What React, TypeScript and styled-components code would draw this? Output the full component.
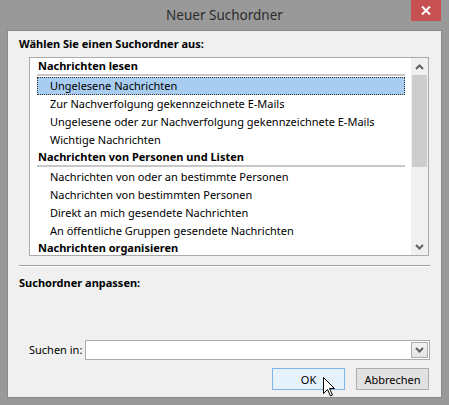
import React from "react";
import styled, { createGlobalStyle } from "styled-components";

const GlobalStyle = createGlobalStyle`
  html, body {
    margin: 0;
    padding: 0;
    background: #999999;
  }
  * {
    box-sizing: border-box;
  }
`;

const Frame = styled.div`
  position: relative;
  width: 449px;
  height: 405px;
  background: #999999;
  display: flex;
  flex-direction: column;
  font-family: "Noto Sans", "Open Sans", sans-serif;
  font-size: 11px;
  color: #000;
`;

const TitleBar = styled.div`
  height: 30px;
  display: flex;
  align-items: flex-start;
  justify-content: center;
  position: relative;
`;

const Title = styled.div`
  margin-top: 4px;
  font-size: 13.5px;
  line-height: 22px;
  color: #2b2b2b;
`;

const CloseButton = styled.div`
  position: absolute;
  top: 0;
  right: 8px;
  width: 30px;
  height: 21px;
  background: #c75050;
  display: flex;
  align-items: center;
  justify-content: center;
`;

const Client = styled.div`
  flex: 1;
  margin: 0 7px 7px 7px;
  border: 1px solid #8a8a8a;
  background: #f0f0f0;
  display: flex;
  flex-direction: column;
  padding: 4px 11px 7px 11px;
`;

const SectionLabel = styled.div`
  font-weight: 700;
  line-height: 17px;
`;

const ListBox = styled.div`
  margin: 5px 0 0 10px;
  width: 400px;
  height: 199px;
  border: 1px solid #ababab;
  background: #fff;
  display: flex;
`;

const ListItems = styled.div`
  flex: 1;
  padding: 0 6px 0 7px;
  overflow: hidden;
`;

const GroupHeader = styled.div`
  height: 18px;
  padding: 0 0 0 1px;
  font-weight: 700;
  line-height: 15px;
  border-bottom: 2px solid #c8c8c8;
  margin-bottom: 1px;
`;

const Item = styled.div<{ $selected?: boolean }>`
  height: 18px;
  line-height: 16px;
  padding-left: 12px;
  white-space: nowrap;
  background: ${(p) => (p.$selected ? "#a8cdf1" : "transparent")};
  border: 1px dotted ${(p) => (p.$selected ? "#333" : "transparent")};
`;

const ScrollBar = styled.div`
  width: 17px;
  background: #f0f0f0;
  display: flex;
  flex-direction: column;
`;

const ScrollArrow = styled.div`
  height: 17px;
  display: flex;
  align-items: center;
  justify-content: center;
`;

const ScrollThumb = styled.div`
  height: 92px;
  margin: 0 1px;
  background: #cdcdcd;
`;

const ScrollTrack = styled.div`
  flex: 1;
`;

const Separator = styled.div`
  margin-top: 9px;
  height: 2px;
  border-top: 1px solid #a0a0a0;
  border-bottom: 1px solid #ffffff;
`;

const CustomizeLabel = styled(SectionLabel)`
  margin-top: 7px;
`;

const Spacer = styled.div`
  flex: 1;
`;

const SearchRow = styled.div`
  display: flex;
  align-items: center;
  padding-left: 10px;
  gap: 3px;
`;

const SearchLabel = styled.div`
  line-height: 16px;
`;

const Combo = styled.div`
  flex: 1;
  height: 20px;
  border: 1px solid #ababab;
  background: #fff;
  display: flex;
  justify-content: flex-end;
  align-items: center;
  padding-right: 1px;
`;

const ComboButton = styled.div`
  width: 17px;
  height: 16px;
  border: 1px solid #acacac;
  background: linear-gradient(#f2f2f2, #e4e4e4);
  display: flex;
  align-items: center;
  justify-content: center;
`;

const ButtonRow = styled.div`
  display: flex;
  justify-content: flex-end;
  gap: 11px;
  margin-top: 8px;
  padding-right: 1px;
  position: relative;
`;

const Button = styled.div<{ $default?: boolean }>`
  width: 73px;
  height: 22px;
  display: flex;
  align-items: center;
  justify-content: center;
  border: 1px solid ${(p) => (p.$default ? "#7eb4ea" : "#adadad")};
  background: ${(p) => (p.$default ? "#e5f1fb" : "#e1e1e1")};
`;

const Cursor = styled.svg`
  position: absolute;
  left: 304px;
  top: 9px;
`;

const Chevron: React.FC<{ up?: boolean }> = ({ up }) => (
  <svg width="9" height="6" viewBox="0 0 9 6">
    <path
      d={up ? "M1 5 L4.5 1.5 L8 5" : "M1 1 L4.5 4.5 L8 1"}
      fill="none"
      stroke="#606060"
      strokeWidth="2"
    />
  </svg>
);

const App: React.FC = () => {
  return (
    <>
      <GlobalStyle />
      <Frame>
        <TitleBar>
          <Title>Neuer Suchordner</Title>
          <CloseButton>
            <svg width="10" height="9" viewBox="0 0 10 9">
              <path d="M1 0.5 L9 8.5 M9 0.5 L1 8.5" stroke="#fff" strokeWidth="2" />
            </svg>
          </CloseButton>
        </TitleBar>
        <Client>
          <SectionLabel>Wählen Sie einen Suchordner aus:</SectionLabel>
          <ListBox>
            <ListItems>
              <GroupHeader>Nachrichten lesen</GroupHeader>
              <Item $selected>Ungelesene Nachrichten</Item>
              <Item>Zur Nachverfolgung gekennzeichnete E-Mails</Item>
              <Item>Ungelesene oder zur Nachverfolgung gekennzeichnete E-Mails</Item>
              <Item>Wichtige Nachrichten</Item>
              <GroupHeader>Nachrichten von Personen und Listen</GroupHeader>
              <Item>Nachrichten von oder an bestimmte Personen</Item>
              <Item>Nachrichten von bestimmten Personen</Item>
              <Item>Direkt an mich gesendete Nachrichten</Item>
              <Item>An öffentliche Gruppen gesendete Nachrichten</Item>
              <GroupHeader>Nachrichten organisieren</GroupHeader>
            </ListItems>
            <ScrollBar>
              <ScrollArrow>
                <Chevron up />
              </ScrollArrow>
              <ScrollThumb />
              <ScrollTrack />
              <ScrollArrow>
                <Chevron />
              </ScrollArrow>
            </ScrollBar>
          </ListBox>
          <Separator />
          <CustomizeLabel>Suchordner anpassen:</CustomizeLabel>
          <Spacer />
          <SearchRow>
            <SearchLabel>Suchen in:</SearchLabel>
            <Combo>
              <ComboButton>
                <Chevron />
              </ComboButton>
            </Combo>
          </SearchRow>
          <ButtonRow>
            <Button $default>OK</Button>
            <Button>Abbrechen</Button>
            <Cursor width="13" height="20" viewBox="0 0 13 20">
              <path
                d="M0.5 0.5 L0.5 16.5 L4.5 12.5 L7.5 19 L9.5 18 L6.5 11.5 L11.5 11.5 Z"
                fill="#fff"
                stroke="#000"
                strokeWidth="1"
              />
            </Cursor>
          </ButtonRow>
        </Client>
      </Frame>
    </>
  );
};

export default App;
